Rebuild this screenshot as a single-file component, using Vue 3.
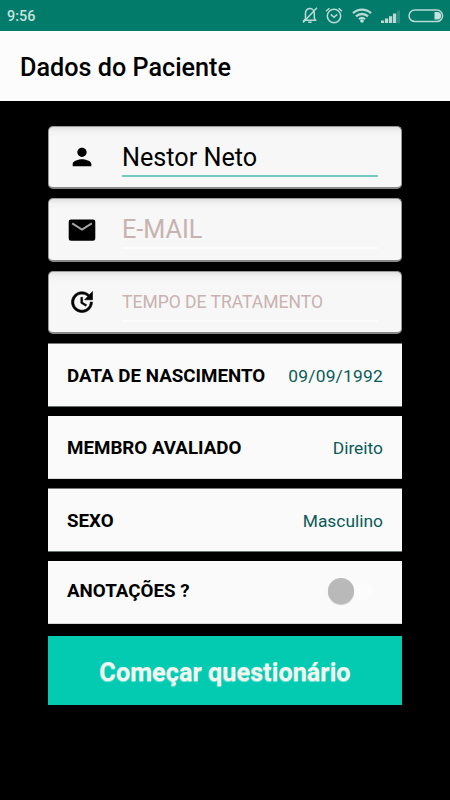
<template>
  <div class="tela">
    <!-- Barra de status do aparelho -->
    <div class="status">
      <span class="hora">9:56</span>
      <div class="indicadores">
        <svg class="sino" width="16" height="17" viewBox="0 0 16 17">
          <path d="M3.5 12V6.5a4.2 4.2 0 0 1 8.8-1V11l1.2 2.2H2.2L3.5 12M6.2 15.2h3.4M15 .8L1 15.6" />
        </svg>
        <svg class="alarme" width="18" height="17" viewBox="0 0 18 17">
          <circle cx="9" cy="9" r="6.7" />
          <path d="M5.8 7.4L9 10.2l3.2-2.8M1 4.2L4.4 1.2M17 4.2l-3.4-3" />
        </svg>
        <svg class="wifi" width="20" height="15" viewBox="0 0 20 15">
          <path d="M1 5.2a13 13 0 0 1 18 0M4 8.4a8.7 8.7 0 0 1 12 0M7 11.2a4.5 4.5 0 0 1 6 0" />
          <circle cx="10" cy="13" r="1.8" />
        </svg>
        <svg class="sinal" width="20" height="14" viewBox="0 0 20 14">
          <path d="M0 11.4h3.2V14H0zM4 9.6h3.2V14H4zM8 7.2h3.2V14H8zM12 4.6h3.2V14h-3.2z" />
          <path class="fraco" d="M16 1.6h3V14h-3z" />
        </svg>
        <svg class="bateria" width="36" height="14" viewBox="0 0 36 14">
          <rect x="1" y="1" width="33.6" height="11.6" rx="5.8" />
          <path d="M26.5 3h2.8a3.8 3.8 0 0 1 0 7.6h-2.8z" />
        </svg>
      </div>
    </div>

    <header class="topo">
      <h1 class="titulo">Dados do Paciente</h1>
    </header>

    <main class="formulario">
      <!-- Campos de texto -->
      <label
        v-for="campo in campos"
        :key="campo.nome"
        class="campo"
        :class="campo.nome"
      >
        <svg class="icone" width="28" height="28" viewBox="0 0 24 24">
          <path :d="campo.icone" />
          <path v-if="campo.nome === 'email'" class="dobra" d="M3.6 6.4L12 11.6l8.4-5.2" />
        </svg>
        <input v-model="campo.valor" class="entrada" type="text" :placeholder="campo.dica" />
      </label>

      <!-- Opções selecionáveis -->
      <div v-for="opcao in opcoes" :key="opcao.rotulo" class="linha">
        <span class="rotulo">{{ opcao.rotulo }}</span>
        <span class="valor" :class="{ data: opcao.data }">{{ opcao.valor }}</span>
      </div>

      <div class="linha anotacoes">
        <span class="rotulo">ANOTAÇÕES ?</span>
        <button
          class="chave"
          :class="{ ligada: anotacoes }"
          aria-label="Anotações"
          @click="anotacoes = !anotacoes"
        >
          <span class="bolinha"></span>
        </button>
      </div>

      <button class="comecar">Começar questionário</button>
    </main>
  </div>
</template>

<script setup>
import { ref } from 'vue'

// Campos preenchidos pelo usuário
const campos = ref([
  {
    nome: 'nome',
    valor: 'Nestor Neto',
    dica: 'NOME',
    icone: 'M12 12c2.21 0 4-1.79 4-4s-1.79-4-4-4-4 1.79-4 4 1.79 4 4 4zm0 2c-2.67 0-8 1.34-8 4v2h16v-2c0-2.66-5.33-4-8-4z'
  },
  {
    nome: 'email',
    valor: '',
    dica: 'E-MAIL',
    icone: 'M2.6 3h18.8a2 2 0 0 1 2 2v14.2a2 2 0 0 1-2 2H2.6a2 2 0 0 1-2-2V5a2 2 0 0 1 2-2z'
  },
  {
    nome: 'tempo',
    valor: '',
    dica: 'TEMPO DE TRATAMENTO',
    icone: 'M21 10.12h-6.78l2.74-2.82c-2.73-2.7-7.15-2.8-9.88-.1-2.73 2.71-2.73 7.08 0 9.79s7.15 2.71 9.88 0C18.32 15.65 19 14.08 19 12.1h2c0 1.98-.88 4.55-2.64 6.29-3.51 3.48-9.21 3.48-12.72 0-3.5-3.47-3.53-9.11-.02-12.58s9.14-3.47 12.65 0L21 3v7.12zM12.5 8v4.25l3.5 2.08-.72 1.21L11 13V8h1.5z'
  }
])

const opcoes = [
  { rotulo: 'DATA DE NASCIMENTO', valor: '09/09/1992', data: true },
  { rotulo: 'MEMBRO AVALIADO', valor: 'Direito' },
  { rotulo: 'SEXO', valor: 'Masculino' }
]

const anotacoes = ref(false)
</script>

<style>
body {
  background-color: #000;
}
</style>

<style scoped>
.tela {
  display: flex;
  flex-direction: column;
  min-height: 100vh;
  background-color: #000;
  font-family: Roboto, "Liberation Sans", sans-serif;
}

.tela * { box-sizing: border-box; }

.status {
  display: flex;
  align-items: center;
  justify-content: space-between;
  height: 31px;
  padding: 0 6px 0 7px;
  background-color: #037b6b;
}

.hora {
  padding-top: 1px;
  font-size: 14.4px;
  font-weight: 500;
  color: #c5e2de;
}

.indicadores {
  display: flex;
  align-items: center;
}

.indicadores svg {
  fill: none;
  stroke: #b9dad5;
  stroke-width: 1.5;
}

.alarme { margin-left: 7px; }

.wifi { margin-left: 9px; }
.indicadores .wifi { stroke-width: 2.3; }
.wifi circle { fill: #c5e2de; stroke: none; }

.sinal { margin-left: 9px; }
.indicadores .sinal { fill: #b9dad5; stroke: none; }
.sinal .fraco { fill: #2b8f81; }

.bateria { margin-left: 7px; }
.bateria path { fill: #c5e2de; stroke: none; }

.topo {
  display: flex;
  align-items: center;
  height: 70px;
  padding: 4px 20px 0;
  background-color: #fcfcfc;
}

.titulo {
  margin: 0;
  font-size: 25.2px;
  font-weight: 500;
  line-height: 30px;
  color: #000;
}

.formulario {
  display: flex;
  flex-direction: column;
  gap: 9px;
  padding: 25px 48px 0;
}

.campo {
  display: flex;
  align-items: flex-start;
  height: 63px;
  padding: 11px 23px 0 20px;
  border: 1px solid #999;
  border-bottom: 2px solid #888;
  border-radius: 5px;
  background: linear-gradient(#e2e2e2, #f2f2f2 5px, #f7f7f7 10px);
}

.campo.email { height: 64px; padding-top: 12px; }

.icone {
  flex: none;
  margin: 5px 26px 0 -1px;
  fill: #000;
}

.tempo .icone {
  stroke: #000;
  stroke-width: .5;
}

.dobra {
  fill: none;
  stroke: #a5a5a5;
  stroke-width: 1.7;
}

.entrada {
  flex: 1;
  min-width: 0;
  height: 39px;
  padding: 1px 0 0;
  border: none;
  border-bottom: 2px solid #fcfcfc;
  outline: none;
  background: transparent;
  font-family: inherit;
  font-size: 25.2px;
  color: #000;
}

.nome .entrada { border-bottom-color: #72cdbd; }

.email .entrada { height: 38px; }

.tempo .entrada { font-size: 17.5px; }

.entrada::placeholder {
  color: #c8b2b0;
  opacity: 1;
}

.linha {
  display: flex;
  align-items: center;
  justify-content: space-between;
  height: 63px;
  padding: 2px 19px 0;
  border-bottom: 1px solid #d8d8d8;
  background-color: #fafafa;
}

.linha:nth-child(4),
.linha:nth-child(6) {
  height: 64px;
  padding-top: 1px;
  border-top: 1px solid #777;
  border-bottom-color: #667371;
}

.linha.anotacoes {
  padding: 0 19px 3px;
}

.rotulo {
  font-size: 18.75px;
  font-weight: 700;
  color: #000;
}

.valor {
  font-size: 17.4px;
  color: #0b5a58;
}

.valor.data { letter-spacing: .22px; }

.chave {
  display: flex;
  align-items: center;
  width: 45px;
  height: 18px;
  margin-right: 10px;
  padding: 0;
  border: none;
  border-radius: 9px;
  background-color: #fcfcfc;
}

.chave.ligada { justify-content: flex-end; }

.bolinha {
  width: 26px;
  height: 26px;
  border-radius: 50%;
  background-color: #b9b9b9;
  box-shadow: 0 1px 1px rgba(0, 0, 0, .2);
}

.comecar {
  height: 69px;
  margin-top: 3px;
  padding: 4px 0 0;
  border: none;
  background-color: #03cbb2;
  font-family: inherit;
  font-size: 25.3px;
  font-weight: 700;
  color: #f3f6ee;
  text-shadow: 0 1px 1px rgba(255, 255, 255, .5);
}
</style>
